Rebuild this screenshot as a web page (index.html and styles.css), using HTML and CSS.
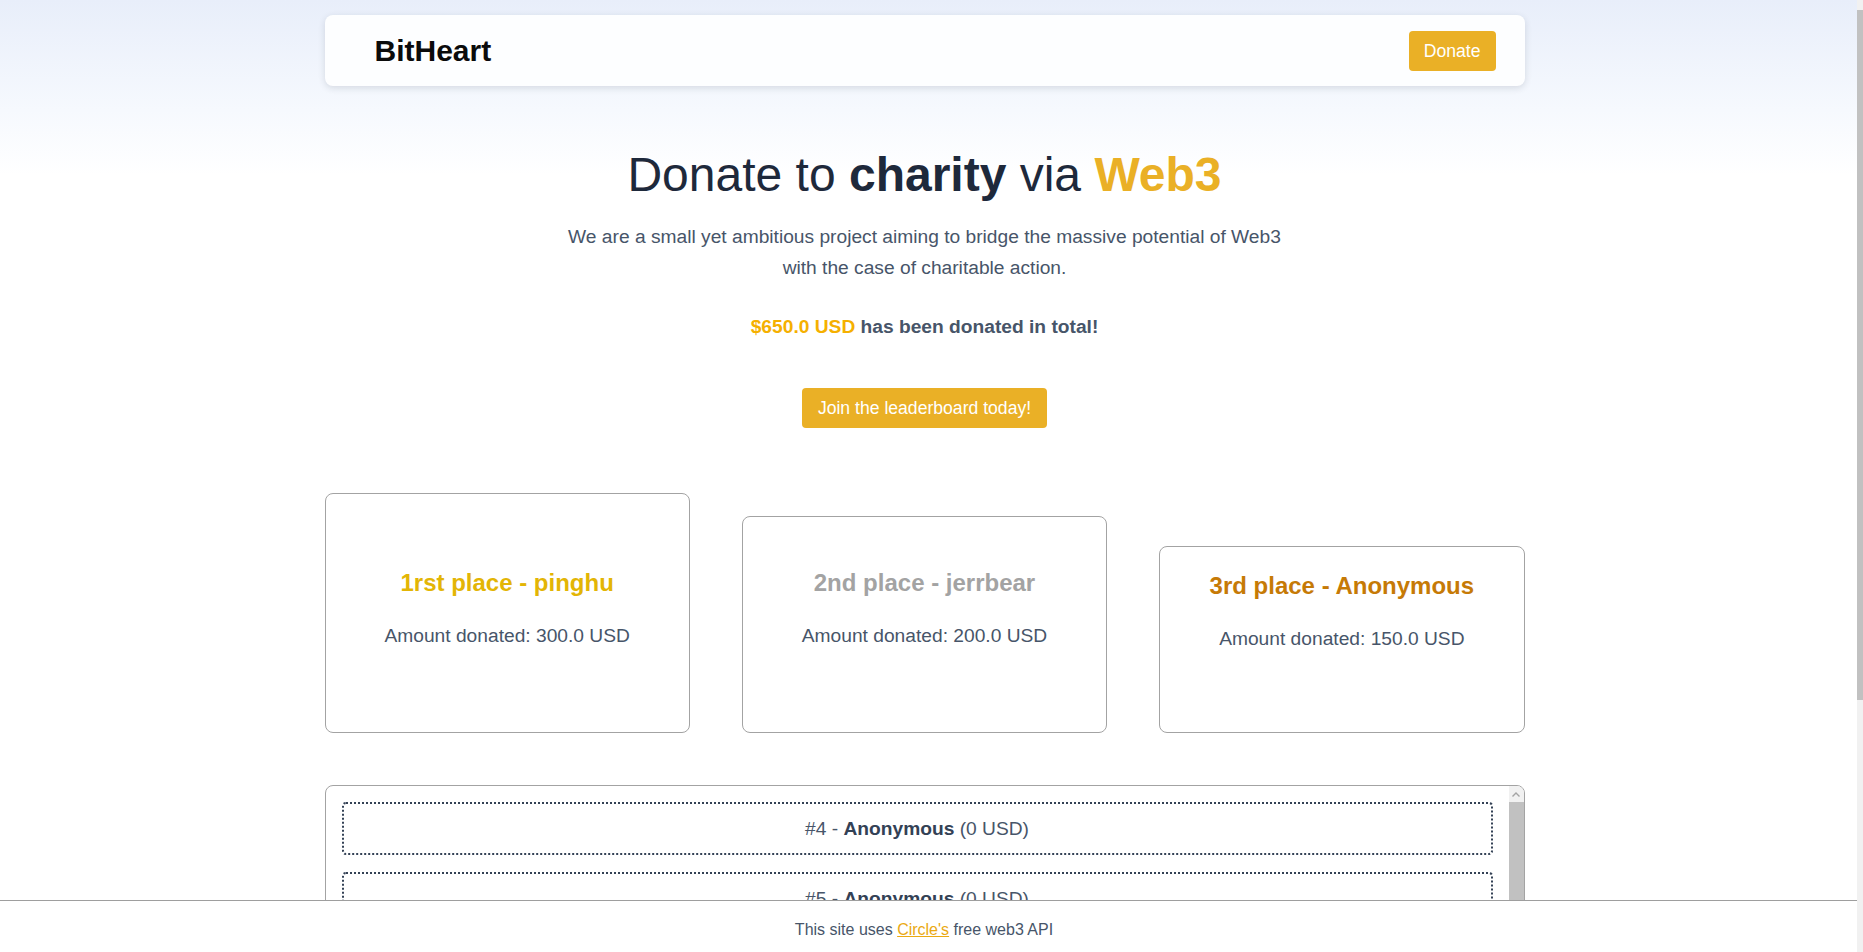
FILE: index.html
```html
<!DOCTYPE html>
<html lang="en">
<head>
<meta charset="utf-8">
<title>BitHeart</title>
<link rel="stylesheet" href="styles.css">
</head>
<body>
<div class="page">
  <nav class="nav">
    <div class="logo">BitHeart</div>
    <a class="btn btn-nav" href="#">Donate</a>
  </nav>

  <section class="hero">
    <h1 class="title">Donate to <b>charity</b> via <b class="gold">Web3</b></h1>
    <p class="lead">We are a small yet ambitious project aiming to bridge the massive potential of Web3<br>with the case of charitable action.</p>
    <p class="total"><span class="amount">$650.0 USD</span> has been donated in total!</p>
    <a class="btn btn-join" href="#">Join the leaderboard today!</a>
  </section>

  <section class="podium">
    <div class="card card-first">
      <h2 class="card-title first">1rst place - pinghu</h2>
      <p class="card-amount">Amount donated: 300.0 USD</p>
    </div>
    <div class="card card-second">
      <h2 class="card-title second">2nd place - jerrbear</h2>
      <p class="card-amount">Amount donated: 200.0 USD</p>
    </div>
    <div class="card card-third">
      <h2 class="card-title third">3rd place - Anonymous</h2>
      <p class="card-amount">Amount donated: 150.0 USD</p>
    </div>
  </section>

  <section class="list">
    <div class="list-body">
      <div class="row">#4 - <b>Anonymous</b> (0 USD)</div>
      <div class="row">#5 - <b>Anonymous</b> (0 USD)</div>
      <div class="row">#6 - <b>Anonymous</b> (0 USD)</div>
      <div class="row">#7 - <b>Anonymous</b> (0 USD)</div>
      <div class="row">#8 - <b>Anonymous</b> (0 USD)</div>
      <div class="row">#9 - <b>Anonymous</b> (0 USD)</div>
    </div>
    <div class="list-scroll" aria-hidden="true">
      <div class="list-arrow">
        <svg width="8" height="5" viewBox="0 0 8 5"><path d="M0.5 4.5 L4 1 L7.5 4.5" fill="none" stroke="#a3a3a3" stroke-width="1.4"/></svg>
      </div>
      <div class="list-thumb"></div>
    </div>
  </section>
</div>

<footer class="footer">This site uses <a class="footer-link" href="#">Circle's</a> free web3 API</footer>

<div class="page-scroll" aria-hidden="true">
  <div class="page-arrow"></div>
  <div class="page-thumb"></div>
</div>
</body>
</html>
```

FILE: styles.css
```css
* { box-sizing: border-box; }

html, body {
  margin: 0;
  padding: 0;
}

body {
  font-family: "Liberation Sans", Arial, sans-serif;
  color: #475569;
  padding-right: 14px;
  background: linear-gradient(to bottom, #e8eefa 0px, #f6f9fe 110px, #ffffff 175px) no-repeat, #ffffff;
}

.page {
  width: 1200px;
  margin: 0 auto;
  padding: 15px 0 87px;
}

/* Navbar */
.nav {
  height: 71px;
  display: flex;
  align-items: center;
  justify-content: space-between;
  padding: 0 29px 0 50px;
  background: #fdfeff;
  border-radius: 8px;
  box-shadow: 0 2px 7px rgba(30, 41, 59, 0.14);
}

.logo {
  font-size: 30px;
  line-height: 36px;
  font-weight: 700;
  color: #0b0b0b;
}

.btn {
  display: inline-block;
  background: #eab026;
  color: #ffffff;
  text-decoration: none;
  font-size: 17.6px;
  line-height: 24px;
  border-radius: 4px;
  padding: 8px 16px;
}

.btn-nav {
  padding: 8px 15px;
}

/* Hero */
.hero {
  text-align: center;
}

.title {
  margin: 65px 0 0;
  font-size: 48px;
  line-height: 48px;
  font-weight: 400;
  color: #1e293b;
}

.title b { font-weight: 700; }
.gold { color: #eab026; }

.lead {
  margin: 23px 0 0;
  font-size: 19.2px;
  line-height: 30.7px;
  color: #475569;
}

.total {
  margin: 29px 0 0;
  font-size: 19.2px;
  line-height: 30.7px;
  font-weight: 700;
  color: #475569;
}

.amount { color: #f5b000; }

.btn-join {
  margin-top: 45px;
}

/* Podium cards */
.podium {
  margin-top: 65px;
  display: grid;
  grid-template-columns: 1fr 1fr 1fr;
  column-gap: 52px;
  align-items: end;
}

.card {
  border: 1px solid #a3a3a3;
  border-radius: 8px;
  background: #ffffff;
  text-align: center;
}

.card-first { height: 240px; padding-top: 73px; }
.card-second { height: 217px; padding-top: 50px; }
.card-third { height: 187px; padding-top: 23px; }

.card-title {
  margin: 0;
  font-size: 24px;
  line-height: 32px;
  font-weight: 700;
}

.first { color: #e3b505; }
.second { color: #a3a3a3; }
.third { color: #c67a06; }

.card-amount {
  margin: 23px 0 0;
  font-size: 19.2px;
  line-height: 28.8px;
  color: #475569;
}

/* Leaderboard list */
.list {
  margin-top: 52px;
  height: 420px;
  border: 1px solid #a3a3a3;
  border-radius: 8px;
  overflow: hidden;
  display: flex;
}

.list-body {
  flex: 1;
  padding: 16px;
  display: flex;
  flex-direction: column;
  gap: 17px;
  overflow: hidden;
}

.list-scroll {
  width: 15px;
  flex-shrink: 0;
  background: #f1f1f1;
  display: flex;
  flex-direction: column;
}

.list-arrow {
  height: 16px;
  display: flex;
  align-items: center;
  justify-content: center;
}

.list-thumb {
  height: 372px;
  background: #c1c1c1;
}

.row {
  flex-shrink: 0;
  border: 2px dotted #334155;
  border-radius: 4px;
  padding: 10px;
  text-align: center;
  font-size: 19.2px;
  line-height: 29px;
  color: #475569;
}

.row b { color: #334155; }

/* Footer */
.footer {
  position: fixed;
  left: 0;
  right: 6px;
  bottom: 0;
  background: #ffffff;
  border-top: 1px solid #9e9e9e;
  padding: 17px 9px 10px 0;
  text-align: center;
  font-size: 16px;
  line-height: 24px;
  color: #475569;
}

.footer-link {
  color: #eaa912;
  text-decoration: underline;
}

/* Page scrollbar strip */
.page-scroll {
  position: fixed;
  top: 0;
  right: 0;
  bottom: 0;
  width: 6px;
  background: #f1f1f1;
  display: flex;
  flex-direction: column;
}

.page-arrow {
  height: 10px;
}

.page-thumb {
  height: 690px;
  background: #c1c1c1;
}
```
